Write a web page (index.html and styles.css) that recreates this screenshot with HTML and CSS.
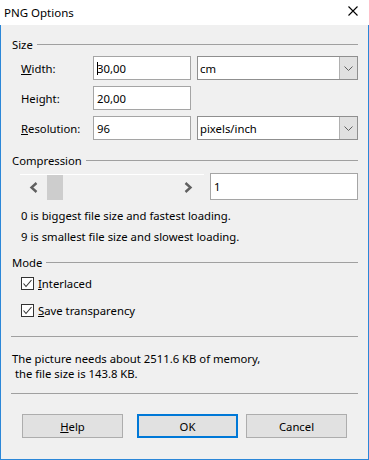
FILE: index.html
```html
<!DOCTYPE html>
<html lang="en">
<head>
  <meta charset="UTF-8">
  <title>PNG Options</title>
  <link rel="stylesheet" href="styles.css">
</head>
<body>

  <div class="window">

    <!-- Title bar -->
    <div class="titlebar">
      <span class="title">PNG Options</span>
      <svg class="close" width="10" height="10" viewBox="0 0 10 10">
        <path d="M0.5 0.5 L9.5 9.5 M9.5 0.5 L0.5 9.5" stroke="#000" stroke-width="1.1" fill="none"/>
      </svg>
    </div>

    <div class="content">

      <!-- Size -->
      <div class="group-head"><span>Size</span><span class="rule"></span></div>
      <div class="field-rows">
        <div class="field-row">
          <label><u>W</u>idth:</label>
          <div class="textbox"><span class="caret"></span>30,00</div>
          <div class="select">cm<span class="drop"><svg width="9" height="5" viewBox="0 0 9 5"><path d="M0.5 0.5 L4.5 4.5 L8.5 0.5" stroke="#606060" fill="none"/></svg></span></div>
        </div>
        <div class="field-row">
          <label>Height:</label>
          <div class="textbox">20,00</div>
        </div>
        <div class="field-row">
          <label><u>R</u>esolution:</label>
          <div class="textbox">96</div>
          <div class="select">pixels/inch<span class="drop"><svg width="9" height="5" viewBox="0 0 9 5"><path d="M0.5 0.5 L4.5 4.5 L8.5 0.5" stroke="#606060" fill="none"/></svg></span></div>
        </div>
      </div>

      <!-- Compression -->
      <div class="group-head compression"><span>Compression</span><span class="rule"></span></div>
      <div class="slider-row">
        <div class="scrollbar">
          <svg class="arrow" width="9" height="11" viewBox="0 0 9 11"><path d="M7.5 1 L2.5 5.5 L7.5 10" stroke="#606060" stroke-width="2.4" fill="none"/></svg>
          <div class="thumb"></div>
          <div class="track"></div>
          <svg class="arrow" width="9" height="11" viewBox="0 0 9 11"><path d="M1.5 1 L6.5 5.5 L1.5 10" stroke="#606060" stroke-width="2.4" fill="none"/></svg>
        </div>
        <div class="textbox level">1</div>
      </div>
      <p class="hint">0 is biggest file size and fastest loading.</p>
      <p class="hint">9 is smallest file size and slowest loading.</p>

      <!-- Mode -->
      <div class="group-head mode"><span>Mode</span><span class="rule"></span></div>
      <div class="check-row first">
        <span class="checkbox"><svg width="11" height="11" viewBox="0 0 11 11"><path d="M1.5 5.5 L4 8.5 L9.5 2" stroke="#333" stroke-width="1.1" fill="none"/></svg></span>
        <span><u>I</u>nterlaced</span>
      </div>
      <div class="check-row">
        <span class="checkbox"><svg width="11" height="11" viewBox="0 0 11 11"><path d="M1.5 5.5 L4 8.5 L9.5 2" stroke="#333" stroke-width="1.1" fill="none"/></svg></span>
        <span><u>S</u>ave transparency</span>
      </div>

      <hr class="sep first-sep">
      <p class="info">The picture needs about 2511.6 KB of memory,<br>&nbsp;the file size is 143.8 KB.</p>
      <hr class="sep">

      <!-- Buttons -->
      <div class="buttons">
        <button class="btn"><u>H</u>elp</button>
        <button class="btn default">OK</button>
        <button class="btn">Cancel</button>
      </div>

    </div>
  </div>

</body>
</html>
```

FILE: styles.css
```css
/* General styles */
body {
  margin: 0;
  padding: 0;
  font-family: "Noto Sans", Arial, sans-serif;
  font-size: 11.3px;
  color: #000;
  background-color: #f0f0f0;
}

.window {
  width: 369px;
  height: 460px;
  display: flex;
  flex-direction: column;
}

/* Title bar */
.titlebar {
  height: 25px;
  background-color: #ffffff;
  display: flex;
  align-items: center;
  justify-content: space-between;
  padding: 0 11px 0 4px;
  box-sizing: border-box;
}

.title {
  font-size: 11.5px;
  margin-top: -1px;
}

.close {
  display: block;
  margin-top: -3px;
}

.content {
  flex: 1;
  background-color: #f0f0f0;
  border: 1px solid #2b87d8;
  border-top: none;
  padding: 0 10px 0 11px;
}

/* Group headings with a rule */
.group-head {
  display: flex;
  align-items: center;
  height: 16px;
  margin-top: 11px;
}

.group-head .rule {
  flex: 1;
  height: 1px;
  background-color: #a0a0a0;
  margin-left: 4px;
}

.group-head.compression {
  margin-top: 12px;
}

.group-head.mode {
  margin-top: 7px;
}

/* Size fields */
.field-rows {
  margin-top: 4px;
  display: flex;
  flex-direction: column;
  gap: 6px;
}

.field-row {
  display: flex;
  align-items: center;
  height: 24px;
  padding-left: 9px;
}

.field-row label {
  width: 72px;
}

.textbox {
  position: relative;
  width: 98px;
  height: 24px;
  box-sizing: border-box;
  background-color: #ffffff;
  border: 1px solid #a5a5a5;
  padding-left: 3px;
  display: flex;
  align-items: center;
}

.caret {
  position: absolute;
  left: 3px;
  top: 5px;
  width: 1px;
  height: 13px;
  background-color: #000;
}

.select {
  width: 161px;
  height: 24px;
  margin-left: 6px;
  box-sizing: border-box;
  background-color: #ffffff;
  border: 1px solid #8f8f8f;
  padding-left: 2px;
  display: flex;
  align-items: center;
  justify-content: space-between;
}

.drop {
  width: 17px;
  height: 22px;
  background-color: #e1e1e1;
  border-left: 1px solid #b0b0b0;
  display: flex;
  align-items: center;
  justify-content: center;
}

/* Compression slider */
.slider-row {
  display: flex;
  align-items: center;
  margin-top: 5px;
  height: 27px;
  padding-left: 8px;
}

.scrollbar {
  width: 184px;
  height: 26px;
  margin-top: 1px;
  border-top: 1px solid #ffffff;
  box-sizing: border-box;
  display: flex;
  align-items: center;
}

.scrollbar .arrow:first-child {
  margin-left: 9px;
}

.thumb {
  width: 16px;
  height: 25px;
  margin-left: 9px;
  background-color: #cdcdcd;
}

.track {
  flex: 1;
}

.scrollbar .arrow:last-child {
  margin-right: 11px;
}

.textbox.level {
  width: 148px;
  height: 27px;
  margin-left: 6px;
}

.hint {
  margin: 0;
  line-height: 21px;
  padding-left: 9px;
}

.hint:first-of-type {
  margin-top: 5px;
}

/* Mode checkboxes */
.check-row {
  display: flex;
  align-items: center;
  height: 20px;
  padding-left: 9px;
  margin-top: 7px;
}

.check-row.first {
  margin-top: 3px;
}

.checkbox {
  width: 13px;
  height: 13px;
  box-sizing: border-box;
  border: 1px solid #333;
  background-color: #ffffff;
  margin-right: 4px;
  display: flex;
  align-items: center;
  justify-content: center;
}

.sep {
  border: none;
  border-top: 1px solid #a0a0a0;
  margin: 12px 0 0 -1px;
  height: 0;
}

.sep.first-sep {
  margin-top: 16px;
}

.info {
  margin: 14px 0 0 0;
  line-height: 15px;
}

/* Buttons */
.buttons {
  display: flex;
  gap: 8px;
  margin-top: 20px;
  padding-left: 10px;
}

.btn {
  width: 101px;
  height: 24px;
  font-family: inherit;
  font-size: 11.3px;
  color: #000;
  background-color: #e1e1e1;
  border: 1px solid #adadad;
  padding: 0;
}

.btn.default {
  border: 2px solid #0078d7;
  margin-left: 6px;
}
```
